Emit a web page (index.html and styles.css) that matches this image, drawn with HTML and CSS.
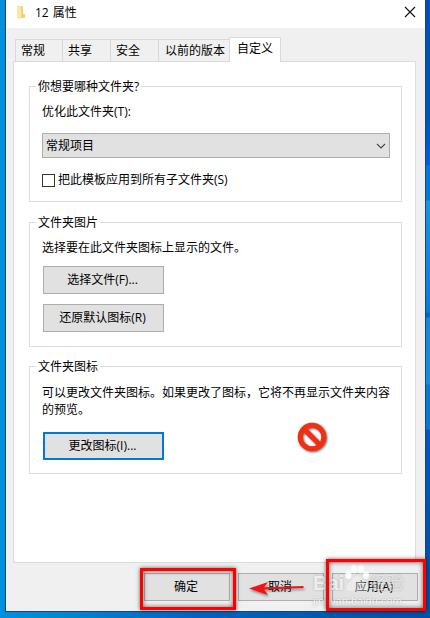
FILE: index.html
```html
<!DOCTYPE html>
<html lang="zh-CN">

<head>
    <meta charset="UTF-8">
    <meta name="viewport" content="width=device-width, initial-scale=1.0">
    <title>12 属性</title>
    <link rel="stylesheet" href="styles.css">
</head>

<body>

    <div class="dialog">
        <div class="titlebar">
            <svg class="folder" width="11" height="14" viewBox="0 0 11 14">
                <path d="M1 1h5l1 1v7h2v4H1z" fill="#f3d276" />
                <path d="M1 0l4 2v12l-4-1z" fill="#fbe8a8" />
            </svg>
            <span class="title">12 属性</span>
            <svg class="close" width="12" height="12" viewBox="0 0 12 12">
                <path d="M1 1l10 10M11 1L1 11" stroke="#111" stroke-width="1.1" />
            </svg>
        </div>

        <div class="tabs">
            <div class="tab tab-first">常规</div>
            <div class="tab">共享</div>
            <div class="tab">安全</div>
            <div class="tab tab-wide">以前的版本</div>
            <div class="tab active">自定义</div>
        </div>

        <div class="panel">
            <div class="group group-type">
                <div class="legend">你想要哪种文件夹?</div>
                <div class="text">优化此文件夹(T):</div>
                <div class="select">
                    <span>常规项目</span>
                    <svg width="10" height="6" viewBox="0 0 10 6">
                        <path d="M1 1l4 4 4-4" fill="none" stroke="#444" stroke-width="1.1" />
                    </svg>
                </div>
                <div class="check"><span class="box"></span>把此模板应用到所有子文件夹(S)</div>
            </div>

            <div class="group group-picture">
                <div class="legend">文件夹图片</div>
                <div class="text">选择要在此文件夹图标上显示的文件。</div>
                <div class="btn">选择文件(F)...</div>
                <div class="btn">还原默认图标(R)</div>
            </div>

            <div class="group group-icon">
                <div class="legend">文件夹图标</div>
                <div class="text">可以更改文件夹图标。如果更改了图标，它将不再显示文件夹内容的预览。</div>
                <div class="btn focus">更改图标(I)...</div>
            </div>
        </div>

        <div class="footer">
            <div class="btn">确定</div>
            <div class="btn">取消</div>
            <div class="btn">应用(A)</div>
        </div>
    </div>

    <!-- marks over the dialog -->
    <svg class="forbidden" width="34" height="34" viewBox="0 0 34 34">
        <g fill="none" stroke="#f52e12" stroke-width="5">
            <circle cx="16" cy="16" r="11.8" />
            <path d="M8 8l16 16" />
        </g>
    </svg>

    <svg class="arrow" width="56" height="16" viewBox="0 0 56 16">
        <path d="M0 8.500L19 2l-4 5.200L54.500 6v2L15 9.500l4 5.500z" fill="#f01414" />
    </svg>

    <div class="watermark">
        <div class="brand">
            <span class="brand-bai">Bai</span>
            <svg width="26" height="30" viewBox="0 0 26 30">
                <ellipse cx="4.500" cy="11" rx="3" ry="4" />
                <ellipse cx="10" cy="5" rx="3" ry="4.500" />
                <ellipse cx="17" cy="5" rx="3" ry="4.500" />
                <ellipse cx="22" cy="11" rx="3" ry="4" />
                <path class="pad" d="M13 12c-5 0-5 5-9 8-4 4-1 8 4 7h10c5 1 8-3 4-7-4-3-4-8-9-8z" />
            </svg>
            <span class="brand-cn">经验</span>
        </div>
        <div class="site">jingyan.baidu.com</div>
    </div>

    <div class="mark mark-ok"></div>
    <div class="mark mark-apply"></div>

</body>

</html>
```
FILE: styles.css
```css
body {
    margin: 0;
    width: 430px;
    height: 618px;
    overflow: hidden;
    position: relative;
    font-family: "Open Sans", "Noto Sans CJK SC", sans-serif;
    font-size: 12px;
    line-height: 16px;
    color: #000;
    background: linear-gradient(to right, #0090e0 0, #0086da 60px, #0064c0 200px, #0050a8 100%);
}

body::before {
    content: "";
    position: absolute;
    right: 0;
    top: 0;
    width: 6px;
    height: 570px;
    background: linear-gradient(#0050b4 0, #0054c0 120px, #0060d8 165px, #0078dc 166px, #0078dc 200px, #1c94e0 201px, #0a7cd6 312px, #0066cc 313px, #0066cc 317px, #1a86d8 318px, #1a8cdc 384px, #0a78d0 385px, #0a78d0 429px, #0058bc 430px, #0050a8 570px);
}

.dialog {
    position: relative;
    box-sizing: border-box;
    width: 421px;
    height: 612px;
    margin-left: 5px;
    border: 1px solid #17466e;
    border-top: none;
    background: #f0f0f0;
}

.titlebar {
    display: flex;
    align-items: center;
    box-sizing: border-box;
    height: 28px;
    padding: 0 9px 4px 10px;
    background: #fff;
}

.title {
    flex: 1;
    margin-left: 8px;
    padding-top: 1px;
    word-spacing: 1px;
}

.tabs {
    display: flex;
    align-items: flex-end;
    height: 34px;
    padding-left: 9px;
}

.tab {
    box-sizing: border-box;
    width: 48px;
    height: 23px;
    padding: 3px 0 0 5px;
    border: 1px solid #d9d9d9;
    border-right: none;
}

.tab-first {
    width: 47px;
}

.tab-wide {
    width: 71px;
    padding-left: 6px;
}

.tab.active {
    position: relative;
    width: 52px;
    height: 25px;
    padding: 3px 0 0 7px;
    border-right: 1px solid #d9d9d9;
    border-bottom: none;
    background: #fff;
}

.panel {
    box-sizing: border-box;
    width: 403px;
    height: 502px;
    margin: -1px 0 0 7px;
    padding: 24px 13px 0 15px;
    border: 1px solid #dcdcdc;
    background: #fff;
}

.group {
    box-sizing: border-box;
    width: 373px;
    padding: 0 11px 0 12px;
    border: 1px solid #dcdcdc;
}

.group-type {
    height: 116px;
}

.group-picture {
    height: 125px;
    margin-top: 20px;
}

.group-icon {
    height: 108px;
    margin-top: 19px;
}

.legend {
    width: max-content;
    margin: -8px 0 0 -6px;
    padding: 0 2px;
    background: #fff;
}

.text {
    margin-top: 9px;
}

.group-icon .text {
    line-height: 17px;
}

.select {
    display: flex;
    align-items: center;
    justify-content: space-between;
    box-sizing: border-box;
    width: 348px;
    height: 25px;
    margin-top: 13px;
    padding: 0 3px;
    border: 1px solid #adadad;
    background: #e1e1e1;
}

.check {
    display: flex;
    align-items: center;
    margin-top: 14px;
}

.box {
    box-sizing: border-box;
    width: 13px;
    height: 13px;
    margin-right: 3px;
    border: 1px solid #333;
}

.btn {
    box-sizing: border-box;
    width: 121px;
    height: 28px;
    margin: 10px 0 0 1px;
    padding-right: 2px;
    border: 1px solid #adadad;
    background: #e1e1e1;
    line-height: 26px;
    text-align: center;
}

.btn.focus {
    margin-top: 14px;
    border: 2px solid #0078d7;
    line-height: 24px;
}

.footer {
    display: flex;
    justify-content: flex-end;
    gap: 8px;
    padding: 10px 7px 0 0;
}

.footer .btn {
    width: 86px;
    margin: 0;
}

.forbidden {
    position: absolute;
    left: 296px;
    top: 421px;
    filter: drop-shadow(1px 1px 1px rgba(0, 0, 0, 0.6));
}

.arrow {
    position: absolute;
    left: 249px;
    top: 580px;
    filter: drop-shadow(1px 2px 1px rgba(0, 0, 0, 0.35));
}

.watermark {
    position: absolute;
    left: 313px;
    top: 564px;
    color: rgba(255, 255, 255, 0.8);
    text-shadow: 0 0 2px rgba(100, 100, 100, 0.45);
}

.brand {
    display: flex;
    align-items: flex-end;
    height: 30px;
}

.brand svg {
    fill: rgba(255, 255, 255, 0.85);
}

.brand .pad {
    fill: rgba(255, 255, 255, 0.35);
}

.brand-bai {
    font: bold 20px/22px "Liberation Sans", sans-serif;
}

.brand-cn {
    color: rgba(255, 255, 255, 0.6);
    font: 17px/24px "Noto Sans CJK SC", sans-serif;
}

.site {
    font: 11px/14px "Liberation Sans", sans-serif;
}

.mark {
    position: absolute;
    box-sizing: border-box;
    border: 3px solid #fe0000;
    box-shadow: 0 0 4px rgba(0, 0, 0, 0.6), inset 0 0 5px rgba(0, 0, 0, 0.6);
}

.mark-ok {
    left: 140px;
    top: 568px;
    width: 96px;
    height: 42px;
}

.mark-apply {
    left: 326px;
    top: 559px;
    width: 100px;
    height: 52px;
}
```
